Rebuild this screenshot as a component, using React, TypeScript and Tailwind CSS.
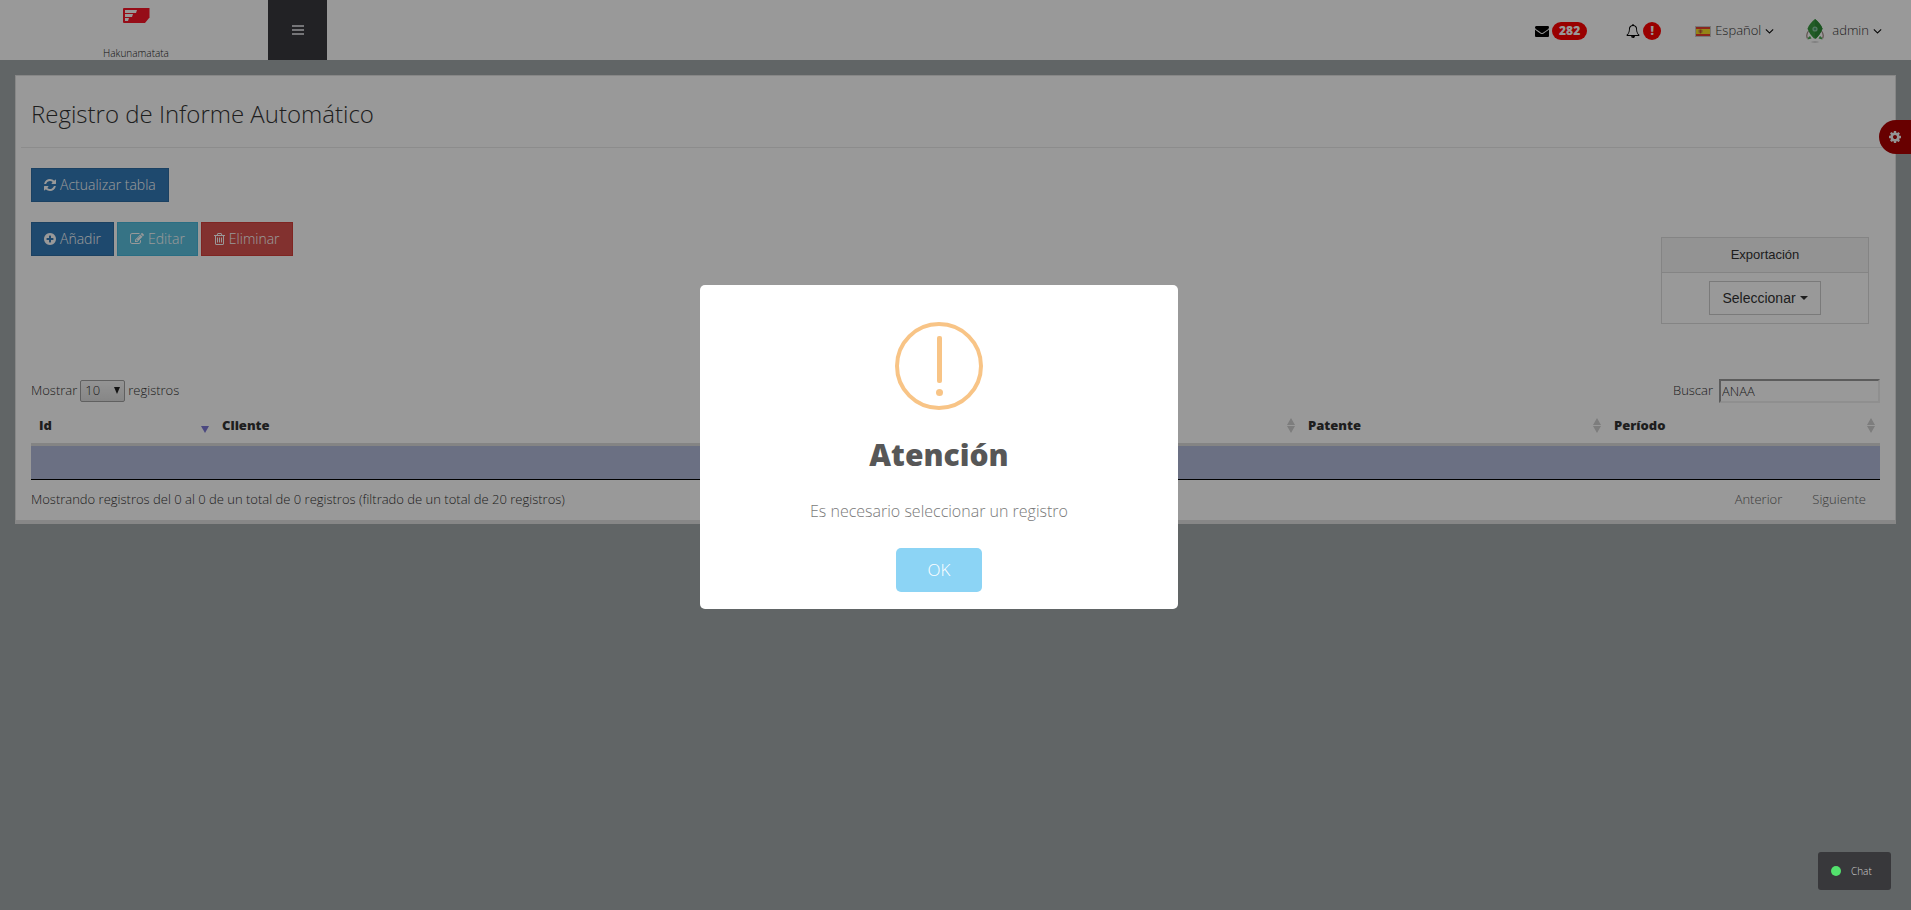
import type { ReactNode } from "react";

type IconProps = { width: number; d: string; className?: string };

/* Glyph on the 1792-unit em grid; `width` is the advance of the glyph. */
function Glyph({ width, d, className = "h-[14px]" }: IconProps) {
  return (
    <svg viewBox={`0 0 ${width} 1792`} className={`inline-block w-auto shrink-0 fill-current ${className}`} aria-hidden="true">
      <path d={d} />
    </svg>
  );
}

const REFRESH =
  "M1511 1056q0 5-1 7-64 268-268 434.5t-478 166.5q-146 0-282.5-55t-243.5-157l-129 129q-19 19-45 19t-45-19-19-45v-448q0-26 19-45t45-19h448q26 0 45 19t19 45-19 45l-137 137q71 66 161 102t187 36q134 0 250-65t186-179q11-17 53-117 8-23 30-23h192q13 0 22.5 9.5t9.5 22.5zm25-800v448q0 26-19 45t-45 19h-448q-26 0-45-19t-19-45 19-45l138-138q-148-137-349-137-134 0-250 65t-186 179q-11 17-53 117-8 23-30 23h-199q-13 0-22.5-9.5t-9.5-22.5v-7q65-268 270-434.5t480-166.5q146 0 284 55.5t245 156.5l130-129q19-19 45-19t45 19 19 45z";
const PLUS_CIRCLE =
  "M1216 960v-128q0-26-19-45t-45-19h-256v-256q0-26-19-45t-45-19h-128q-26 0-45 19t-19 45v256h-256q-26 0-45 19t-19 45v128q0 26 19 45t45 19h256v256q0 26 19 45t45 19h128q26 0 45-19t19-45v-256h256q26 0 45-19t19-45zm320-64q0 209-103 385.5t-279.5 279.5-385.5 103-385.5-103-279.5-279.5-103-385.5 103-385.5 279.5-279.5 385.5-103 385.5 103 279.5 279.5 103 385.5z";
const EDIT =
  "M888 1184l116-116-152-152-116 116v56h96v96h56zm440-720q-16-16-33 1l-350 350q-17 17-1 33t33-1l350-350q17-17 1-33zm80 594v190q0 119-84.5 203.5t-203.5 84.5h-832q-119 0-203.5-84.5t-84.5-203.5v-832q0-119 84.5-203.5t203.5-84.5h832q63 0 117 25 15 7 18 23 3 17-9 29l-49 49q-14 14-32 8-23-6-45-6h-832q-66 0-113 47t-47 113v832q0 66 47 113t113 47h832q66 0 113-47t47-113v-126q0-13 9-22l64-64q15-15 35-7t20 29zm-96-738l288 288-672 672h-288v-288zm444 132l-92 92-288-288 92-92q28-28 68-28t68 28l152 152q28 28 28 68t-28 68z";
const TRASH =
  "M512 736v576q0 14-9 23t-23 9h-64q-14 0-23-9t-9-23v-576q0-14 9-23t23-9h64q14 0 23 9t9 23zm256 0v576q0 14-9 23t-23 9h-64q-14 0-23-9t-9-23v-576q0-14 9-23t23-9h64q14 0 23 9t9 23zm256 0v576q0 14-9 23t-23 9h-64q-14 0-23-9t-9-23v-576q0-14 9-23t23-9h64q14 0 23 9t9 23zm128 724v-948h-896v948q0 22 7 40.5t14.5 27 10.5 8.5h832q3 0 10.5-8.5t14.5-27 7-40.5zm-672-1076h448l-48-117q-7-9-17-11h-317q-10 2-17 11zm928 32v64q0 14-9 23t-23 9h-96v948q0 83-47 143.5t-113 60.5h-832q-66 0-113-58.5t-47-141.5v-952h-96q-14 0-23-9t-9-23v-64q0-14 9-23t23-9h309l70-167q15-37 54-63t79-26h320q40 0 79 26t54 63l70 167h309q14 0 23 9t9 23z";
const COG =
  "M1024 896q0-106-75-181t-181-75-181 75-75 181 75 181 181 75 181-75 75-181zm512-109v222q0 12-8 23t-20 13l-185 28q-19 54-39 91 35 50 107 138 10 12 10 25t-9 23q-27 37-99 108t-94 71q-12 0-26-9l-138-108q-44 23-91 38-16 136-29 186-7 28-36 28h-222q-14 0-24.5-8.5t-11.5-21.5l-28-184q-49-16-90-37l-141 107q-10 9-25 9-14 0-25-11-126-114-165-168-7-10-7-23 0-12 8-23 15-21 51-66.5t54-70.5q-27-50-41-99l-183-27q-13-2-21-12.5t-8-23.5v-222q0-12 8-23t19-13l186-28q14-46 39-92-40-57-107-138-10-12-10-24 0-10 9-23 26-36 98.5-107.5t94.5-71.5q13 0 26 10l138 107q44-23 91-38 16-136 29-186 7-28 36-28h222q14 0 24.5 8.5t11.5 21.5l28 184q49 16 90 37l142-107q9-9 24-9 13 0 25 10 129 119 165 170 7 8 7 22 0 12-8 23-15 21-51 66.5t-54 70.5q26 50 41 98l183 28q13 2 21 12.5t8 23.5z";
const ENVELOPE =
  "M1792 710v794q0 66-47 113t-113 47h-1472q-66 0-113-47t-47-113v-794q44 49 101 87 362 246 497 345 57 42 92.5 65.5t94.5 48 110 24.5h2q51 0 110-24.5t94.5-48 92.5-65.5q170-123 498-345 57-39 100-87zm0-294q0 79-49 151t-122 123q-376 261-468 325-10 7-42.5 31t-54 38.5-52 32.5-57.5 27-50 9h-2q-23 0-50-9t-57.5-27-52-32.5-54-38.5-42.5-31q-91-64-262-182.5t-205-142.5q-62-42-117-115.5t-55-136.5q0-78 41.5-130t118.5-52h1472q65 0 112.5 47t47.5 113z";
const BELL =
  "M912 1696q0-16-16-16-59 0-101.5-42.5t-42.5-101.5q0-16-16-16t-16 16q0 73 51.5 124.5t124.5 51.5q16 0 16-16zm-666-288h1300q-266-300-266-832 0-51-24-105t-69-103-121.5-80.5-169.5-31.5-169.5 31.5-121.5 80.5-69 103-24 105q0 532-266 832zm1482 0q0 52-38 90t-90 38h-448q0 106-75 181t-181 75-181-75-75-181h-448q-52 0-90-38t-38-90q50-42 91-88t85-119.5 74.5-158.5 50-206 19.5-260q0-152 117-282.5t307-158.5q-8-19-8-39 0-40 28-68t68-28 68 28 28 68q0 20-8 39 190 28 307 158.5t117 282.5q0 139 19.5 260t50 206 74.5 158.5 85 119.5 91 88z";
const ANGLE_DOWN =
  "M1075 736q0 13-10 23l-466 466q-10 10-23 10t-23-10l-466-466q-10-10-10-23t10-23l50-50q10-10 23-10t23 10l393 393 393-393q10-10 23-10t23 10l50 50q10 10 10 23z";

function Logo() {
  return (
    <svg viewBox="0 0 27 15" className="h-[15px] w-[27px]" aria-hidden="true">
      <path d="M1 0h25.500v9.500L22 15H1a1 1 0 0 1-1-1V1a1 1 0 0 1 1-1z" fill="#fb1628" />
      <path d="M2 2h12l-1 3H2zM2 6h8l-1 3H2zM2 10h4l-1 3H2z" fill="#fff" />
    </svg>
  );
}

function SpanishFlag() {
  return (
    <svg viewBox="0 0 16 11" className="h-[11px] w-4" aria-hidden="true">
      <rect width="16" height="11" fill="#c9c9c9" />
      <rect x="1" y="1" width="14" height="9" fill="#e8402f" />
      <rect x="1" y="3" width="14" height="5" fill="#f7dc25" />
      <path d="M3.500 4h1v2.500h-1zM6.500 4h1v2.500h-1z" fill="#b98a5c" />
      <path d="M4.500 3.500h2V6.500a1 1 0 0 1-2 0z" fill="#c8502f" />
    </svg>
  );
}

function Rocket() {
  return (
    <svg viewBox="0 0 18 24" className="h-6 w-[18px]" aria-hidden="true">
      <path d="M2.500 12C.5 14.500.3 17 1.500 19.500M15.500 12c2 2.500 2.200 5 1 7.500" fill="none" stroke="#a08b84" strokeWidth="1.200" />
      <path d="M1.500 20.500q.5-3 2.500-3.500l1.500 2.500zM16.500 20.500q-.5-3-2.500-3.500l-1.500 2.500z" fill="#4aa851" />
      <path d="M9 0c3 2.600 6.500 6 7.500 9.800-1.500 3.700-3.500 7-6.500 9.700H8c-3-2.700-5-6-6.500-9.700C2.500 6 6 2.600 9 0z" fill="#389a40" />
      <path d="M9 0c3 2.600 6.500 6 7.500 9.800-1.500 3.700-3.500 7-6.500 9.700H9z" fill="#2e8c37" />
      <circle cx="9" cy="10" r="2.600" fill="#8bc9a0" />
      <circle cx="9" cy="10" r="1.300" fill="#4b9f72" />
      <path d="M4.500 23q4.500-1.500 9 0-4.500 1.500-9 0z" fill="#c9c9c9" />
    </svg>
  );
}

function Badge({ children }: { children: ReactNode }) {
  return (
    <span className="flex h-[18px] min-w-[18px] items-center justify-center rounded-full bg-[#ff0000] px-[7px] text-xs font-extrabold text-white">
      {children}
    </span>
  );
}

function ActionButton({ tone, width, d, children }: { tone: string; width: number; d: string; children: ReactNode }) {
  return (
    <button type="button" className={`flex h-[34px] items-center gap-1 border px-3 text-sm font-light text-white ${tone}`}>
      <Glyph width={width} d={d} />
      {children}
    </button>
  );
}

function SortIcon({ sorted = false }: { sorted?: boolean }) {
  return (
    <svg viewBox="0 0 8 15" className="h-[15px] w-2" aria-hidden="true">
      {sorted ? (
        <path d="M0 8h8l-4 7z" fill="#7d79d6" />
      ) : (
        <path d="M4 0l4 7H0zM0 8h8l-4 7z" fill="#d0d0d0" />
      )}
    </svg>
  );
}

const columns = [
  { label: "Id", width: "w-[183px]", sorted: true },
  { label: "Cliente", width: "w-auto", sorted: false },
  { label: "Patente", width: "w-[306px]", sorted: false },
  { label: "Período", width: "w-[274px]", sorted: false },
];

function Header() {
  return (
    <header className="flex h-[60px] items-stretch justify-between bg-white">
      <div className="flex">
        <a href="#inicio" className="flex w-[268px] flex-col items-center justify-between pt-2 pl-1 text-[10px] leading-[14px] text-[#222]">
          <Logo />
          <span>Hakunamatata</span>
        </a>
        <button type="button" aria-label="Menú" className="flex w-[59px] items-center justify-center bg-[#3a3a3e] text-[#c4c4c8]">
          <svg viewBox="0 0 12 10" className="h-[10px] w-3 fill-current" aria-hidden="true">
            <path d="M0 0h12v2H0zM0 4h12v2H0zM0 8h12v2H0z" />
          </svg>
        </button>
      </div>
      <nav className="flex items-center pt-[2px] pr-[29px] text-[13px] text-[#333]">
        <a href="#mensajes" aria-label="Mensajes" className="mr-[39px] flex items-center gap-[3px] text-black">
          <Glyph width={1792} d={ENVELOPE} />
          <Badge>282</Badge>
        </a>
        <a href="#alertas" aria-label="Alertas" className="mr-[34px] flex items-center gap-[3px] text-black">
          <Glyph width={1792} d={BELL} />
          <Badge>!</Badge>
        </a>
        <a href="#idioma" className="mr-8 flex items-center gap-1">
          <SpanishFlag />
          Español
          <Glyph width={1152} d={ANGLE_DOWN} className="h-[14px] text-black" />
        </a>
        <a href="#perfil" className="flex items-center">
          <Rocket />
          <span className="mr-1 ml-2">admin</span>
          <Glyph width={1152} d={ANGLE_DOWN} className="h-[14px] text-black" />
        </a>
      </nav>
    </header>
  );
}

export default function App() {
  return (
    <div className="min-h-screen bg-[#a2a9aa] font-['Open_Sans','Noto_Sans',sans-serif] font-light">
      <Header />

      <main className="p-[15px]">
        <section className="border border-b-4 border-[#e2e2e2] bg-white px-[5px] pb-3">
          <h1 className="border-b border-[#eaeaea] px-[10px] pt-[21px] pb-[17px] text-2xl leading-[33px] font-light text-[#333]">
            Registro de Informe Automático
          </h1>

          <div className="px-[10px] pt-5">
            <div className="flex items-start justify-between">
              <div className="flex flex-col items-start gap-5">
                <ActionButton tone="border-[#2e6da4] bg-[#337ab7]" width={1536} d={REFRESH}>
                  Actualizar tabla
                </ActionButton>
                <div className="flex gap-[3px]">
                  <ActionButton tone="border-[#2e6da4] bg-[#337ab7]" width={1536} d={PLUS_CIRCLE}>
                    Añadir
                  </ActionButton>
                  <ActionButton tone="border-[#46b8da] bg-[#5bc0de]" width={1792} d={EDIT}>
                    Editar
                  </ActionButton>
                  <ActionButton tone="border-[#d43f3a] bg-[#d9534f]" width={1408} d={TRASH}>
                    Eliminar
                  </ActionButton>
                </div>
              </div>

              <div className="mt-[69px] mr-[11px] w-[208px] border border-[#ddd] font-['Liberation_Sans',Arial,sans-serif] font-normal text-[#333]">
                <div className="border-b border-[#ddd] bg-[#f5f5f5] py-2 text-center text-[13px] leading-[18px]">Exportación</div>
                <div className="flex justify-center py-2">
                  <button type="button" className="flex h-[34px] items-center gap-1 border border-[#ccc] bg-white px-3 text-sm">
                    Seleccionar
                    <svg viewBox="0 0 8 4" className="h-1 w-2 fill-current" aria-hidden="true">
                      <path d="M0 0h8L4 4z" />
                    </svg>
                  </button>
                </div>
              </div>
            </div>

            <div className="mt-[55px] flex items-start justify-between text-[13px] text-[#333]">
              <div className="flex h-6 items-center gap-[3px]">
                <label htmlFor="page-size">Mostrar</label>
                <div className="relative flex">
                  <select
                    id="page-size"
                    defaultValue="10"
                    className="h-[22px] w-[45px] appearance-none rounded-[2px] border border-[#a0a0a0] bg-linear-to-b from-[#f7f7f7] to-[#e0e0e0] pl-1 font-light"
                  >
                    <option>10</option>
                    <option>25</option>
                    <option>50</option>
                  </select>
                  <svg viewBox="0 0 6 7" className="pointer-events-none absolute top-[7px] right-[5px] h-[7px] w-[6px] fill-[#222]" aria-hidden="true">
                    <path d="M0 0h6L3 7z" />
                  </svg>
                </div>
                <span>registros</span>
              </div>
              <div className="flex items-center gap-[6px]">
                <label htmlFor="search">Buscar</label>
                <input
                  id="search"
                  type="text"
                  defaultValue="ANAA"
                  className="h-6 w-[161px] border-2 border-t-[#9a9a9a] border-r-[#eee] border-b-[#eee] border-l-[#9a9a9a] bg-white px-px font-light"
                />
              </div>
            </div>

            <table className="mt-[5px] w-full table-fixed border-collapse text-[13px]">
              <thead>
                <tr className="border-b-[3px] border-[#ddd]">
                  {columns.map((column) => (
                    <th key={column.label} scope="col" className={`${column.width} h-9 pr-[5px] pl-2 text-left font-extrabold text-[#333]`}>
                      <span className="flex items-center justify-between">
                        {column.label}
                        <SortIcon sorted={column.sorted} />
                      </span>
                    </th>
                  ))}
                </tr>
              </thead>
              <tbody>
                <tr className="h-[35px] border-b border-black bg-[#b2bbda]">
                  <td colSpan={4} />
                </tr>
              </tbody>
            </table>

            <div className="flex items-start justify-between pt-[10px] text-[13px] leading-[18px] text-[#333]">
              <p>Mostrando registros del 0 al 0 de un total de 0 registros (filtrado de un total de 20 registros)</p>
              <div className="flex gap-[30px] pr-[14px] text-[#666]">
                <button type="button">Anterior</button>
                <button type="button">Siguiente</button>
              </div>
            </div>
          </div>
        </section>
      </main>

      <button
        type="button"
        aria-label="Ajustes"
        className="fixed top-[120px] right-0 flex h-[34px] w-8 items-center rounded-l-full bg-[#ad0000] pl-[10px] text-[#f5f5f5]"
      >
        <Glyph width={1536} d={COG} />
      </button>

      <div className="fixed inset-0 flex items-center justify-center bg-black/40 pr-[33px] pb-4">
        <div
          role="dialog"
          aria-modal="true"
          aria-labelledby="dialog-title"
          className="flex w-[478px] flex-col items-center rounded-[5px] bg-white px-[17px] pt-[37px] pb-[17px] text-center"
        >
          <svg viewBox="0 0 88 88" className="h-[88px] w-[88px]" aria-hidden="true">
            <circle cx="44" cy="44" r="42" fill="none" stroke="#f8c486" strokeWidth="4" />
            <rect x="42" y="14" width="5" height="47" rx="2" fill="#f8c486" />
            <circle cx="44.500" cy="70.500" r="3.500" fill="#f8c486" />
          </svg>
          <h2 id="dialog-title" className="mt-[25px] text-[30px] leading-10 font-extrabold text-[#575757]">
            Atención
          </h2>
          <p className="mt-6 text-base leading-6 text-[#797979]">Es necesario seleccionar un registro</p>
          <button type="button" className="mt-[25px] h-11 rounded-[5px] bg-[#8cd4f5] px-8 text-[17px] font-light text-white">
            OK
          </button>
        </div>
      </div>

      <button
        type="button"
        className="fixed right-5 bottom-5 flex h-[38px] w-[73px] items-center gap-[10px] rounded-[3px] bg-[#38383b] pl-[13px] text-[10px] text-[#d0d0d0]"
      >
        <span className="h-[10px] w-[10px] rounded-full bg-[#53e16d]" />
        Chat
      </button>
    </div>
  );
}
